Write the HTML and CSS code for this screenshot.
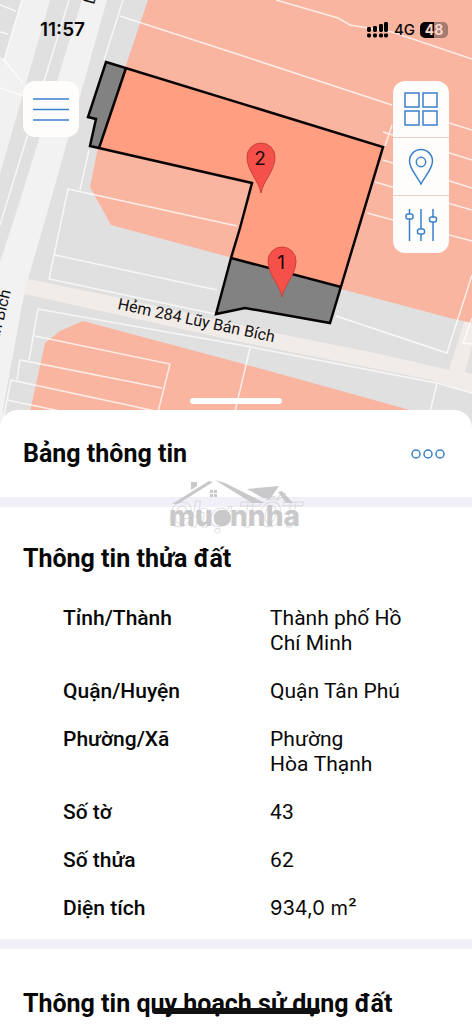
FILE: index.html
```
<!DOCTYPE html>
<html lang="vi">
<head>
  <meta charset="UTF-8" />
  <meta name="viewport" content="width=device-width, initial-scale=1.0" />
  <title>Bảng thông tin</title>
  <link rel="stylesheet" href="styles.css">
</head>
<body>
  <header class="map">
    <svg class="map-canvas" viewBox="0 0 472 430" preserveAspectRatio="xMidYMin slice" aria-label="Bản đồ thửa đất">
      <rect width="472" height="430" fill="#e0e0e0" />

      <!-- roads -->
      <path fill="#f1f1f1" d="M22 0H50L0 174V60H4Z" />
      <path fill="#f2f2f2" d="M82 0H107L48 210L28 279L22 305L3 410V430H0V262L17 210Z" />
      <path fill="#f2ece9" d="M28 279L120 298L275 333L380 354L449 370L472 297V393L432 380L232 340L24 294Z" />
      <path fill="#e0e0e0" d="M465 372L472 345V374Z" />

      <!-- residential land -->
      <path fill="#f9b5a0" d="M148 0H472V323L450 318L341 289L229 257L111 225L90 187L98 148Z" />
      <path fill="#f9b5a0" d="M26 430L45 343L60 331L83 321L240 363L410 410L472 430Z" />

      <!-- parcel borders -->
      <g class="borders">
        <path d="M22 0L4 60L23 83M0 58L4 60M0 88L24 96M0 5L16 11M0 32L8 34M69 0L0 225" />
        <path d="M123 0L104 60M89 150L80 190M120 16L240 55L392 105M276 0L338 18L350 25L392 32L472 59" />
        <path d="M392 125L385 146M420 114L472 130M383 132L472 160M383 160L472 188M375 182L472 210M367 213L472 241" />
        <path d="M237 226L68 189L49 279L215 314M55 255L217 290" />
        <path d="M336 316L447 353L472 275M472 344L463 343L472 318" />
        <path d="M29 360L38 309L240 345L437 383L472 393M437 383L428 420M250 348L233 420" />
        <path d="M35 336L170 364L156 420M17 380L20 360L162 388M3 420L11 380L160 412M7 400L60 411" />
      </g>

      <!-- selected parcel -->
      <path fill="#ff9e80" d="M126 68L383 147L341 287L231 258L252 183L99 148Z" />
      <path fill="#828282" d="M106 62L126 68L99 148L90 146L96 119L88 117Z" />
      <path fill="#828282" d="M231 258L341 287L330 323L245 308L216 314Z" />
      <path class="outline" d="M106 62L383 147L330 323L245 308L216 314L231 258L240 228L252 183L90 146L96 119L88 117Z" />
      <path class="outline" d="M126 68L99 148M231 258L341 287" />

      <!-- markers -->
      <g class="marker">
        <path d="M261 193C259 181 247 171 247 157A14 14 0 0 1 275 157C275 171 263 181 261 193Z" />
        <text x="260" y="165">2</text>
        <path d="M282 297C280 285 268 275 268 261A14 14 0 0 1 296 261C296 275 284 285 282 297Z" />
        <text x="281" y="269">1</text>
      </g>

      <g class="streets">
        <text transform="translate(117 309) rotate(12)">Hẻm 284 Lũy Bán Bích</text>
        <text transform="translate(11 291) rotate(-76)" text-anchor="end">Bán Bích</text>
        <text transform="translate(94 5) rotate(-75)">Lũy Bán Bích</text>
      </g>
    </svg>

    <div class="status">
      <span class="clock">11:57</span>
      <span class="network">
        <svg width="22" height="16" viewBox="0 0 22 16" aria-hidden="true">
          <g fill="#000">
            <rect x="0" y="5" width="4" height="5" rx="1.4" />
            <rect x="6" y="4" width="4" height="6" rx="1.4" />
            <rect x="12" y="2" width="4" height="8" rx="1.4" />
            <rect x="17" y="0" width="4" height="10" rx="1.4" />
            <rect x="0" y="11.5" width="4" height="4" rx="1.4" />
            <rect x="6" y="11.5" width="4" height="4" rx="1.4" />
            <rect x="12" y="11.5" width="4" height="4" rx="1.4" />
            <rect x="17" y="11.5" width="4" height="4" rx="1.4" />
          </g>
        </svg>
        <span>4G</span>
        <span class="battery">48</span>
      </span>
    </div>

    <div class="controls">
      <button class="menu" type="button" aria-label="Menu">
        <svg width="36" height="24" viewBox="0 0 36 24"><path d="M0 2H36M0 12.500H36M0 23H36" /></svg>
      </button>
      <div class="tools">
        <button type="button" aria-label="Lớp bản đồ">
          <svg width="34" height="34" viewBox="0 0 34 34"><path d="M1 1H15V15H1ZM19 1H33V15H19ZM1 19H15V33H1ZM19 19H33V33H19Z" /></svg>
        </button>
        <button type="button" aria-label="Vị trí">
          <svg width="26" height="38" viewBox="0 0 26 38"><path d="M13 36C9 28 1.500 21 1.500 13A11.500 11.500 0 0 1 24.500 13C24.500 21 17 28 13 36Z" /><circle cx="13" cy="14" r="4.700" /></svg>
        </button>
        <button type="button" aria-label="Bộ lọc">
          <svg width="34" height="34" viewBox="0 0 34 34"><path d="M5.500 1V6M5.500 11V33M17 1V21M17 26V33M29 1V9M29 14V33" /><rect x="2" y="6" width="7" height="5" rx="2" /><rect x="13.500" y="21" width="7" height="5" rx="2" /><rect x="25.500" y="9" width="7" height="5" rx="2" /></svg>
        </button>
      </div>
    </div>
    <div class="handle"></div>
  </header>

  <main class="sheet">
    <div class="sheet-header">
      <h1>Bảng thông tin</h1>
      <button class="more" type="button" aria-label="Xem thêm">
        <svg width="36" height="12" viewBox="0 0 36 12"><circle cx="6" cy="6" r="4" /><circle cx="18" cy="6" r="4" /><circle cx="30" cy="6" r="4" /></svg>
      </button>
      <svg class="watermark" width="136" height="64" viewBox="0 0 136 64" aria-hidden="true">
        <path d="M22 4H28V8L22 12ZM3 26L40 3L44 4L9 26ZM46 2L56 5L96 25H83ZM78 11L110 8L101 21L94 20ZM109 14L113 13L124 25H117Z" />
        <path d="M41 12H44V15H41ZM45 12H48V15H45ZM41 16H44V19H41ZM45 16H48V19H45Z" />
        <circle cx="54" cy="40" r="8" />
        <text class="watermark-name" x="0" y="48">muonnha</text>
        <text class="watermark-back" x="0" y="49">Chợ TỐT</text>
      </svg>
    </div>

    <section class="panel">
      <h2>Thông tin thửa đất</h2>
      <table class="info">
        <tr>
          <th scope="row">Tỉnh/Thành</th>
          <td>Thành phố Hồ Chí&nbsp;Minh</td>
        </tr>
        <tr>
          <th scope="row">Quận/Huyện</th>
          <td>Quận Tân Phú</td>
        </tr>
        <tr>
          <th scope="row">Phường/Xã</th>
          <td>Phường Hòa&nbsp;Thạnh</td>
        </tr>
        <tr>
          <th scope="row">Số tờ</th>
          <td>43</td>
        </tr>
        <tr>
          <th scope="row">Số thửa</th>
          <td>62</td>
        </tr>
        <tr>
          <th scope="row">Diện tích</th>
          <td class="area">934,0 m²</td>
        </tr>
      </table>
    </section>

    <section class="panel panel-last">
      <h2>Thông tin quy hoạch sử dụng đất</h2>
    </section>
  </main>

  <div class="home-indicator"></div>
</body>
</html>
```
FILE: styles.css
```
* {
  box-sizing: border-box;
}

body {
  margin: 0;
  font-family: Roboto, sans-serif;
  background: #fff;
  color: #080808;
}

button {
  border: none;
  padding: 0;
  background: none;
  cursor: pointer;
}

button svg {
  display: block;
  fill: none;
  stroke: #3a80ca;
  stroke-width: 1.5;
}

.map {
  position: relative;
  display: flex;
  flex-direction: column;
  height: 430px;
  padding-bottom: 26px;
}

.map-canvas {
  position: absolute;
  inset: 0;
  width: 100%;
  height: 100%;
}

.borders {
  fill: none;
  stroke: #fff;
  stroke-opacity: 0.75;
  stroke-width: 1.5;
}

.outline {
  fill: none;
  stroke: #080404;
  stroke-width: 2.5;
}

.marker path {
  fill: #f6504a;
  stroke: #c9423a;
}

.marker text {
  font-family: Inter, sans-serif;
  font-size: 19px;
  text-anchor: middle;
  fill: #240808;
}

.streets text {
  font-size: 16px;
  fill: #111;
}

.status {
  position: relative;
  display: flex;
  justify-content: space-between;
  align-items: center;
  padding: 18px 24px 0 40px;
  font-family: Inter, sans-serif;
  line-height: 24px;
}

.clock {
  font-size: 19px;
  font-weight: 600;
}

.network {
  display: flex;
  align-items: center;
  gap: 5px;
  font-size: 15px;
  font-weight: 500;
}

.battery {
  width: 28px;
  border-radius: 5px;
  background: linear-gradient(to right, #080404 50%, #a47b70 50%);
  color: #fbd5c8;
  font-size: 14px;
  font-weight: 700;
  line-height: 16px;
  text-align: center;
}

.controls {
  position: relative;
  display: flex;
  justify-content: space-between;
  align-items: flex-start;
  padding: 39px 23px 0;
}

.menu,
.tools {
  width: 56px;
  border-radius: 12px;
  background: #fffdfc;
}

.menu,
.tools button {
  display: flex;
  align-items: center;
  justify-content: center;
  width: 56px;
  height: 56px;
}

.tools button + button {
  height: 58px;
  border-top: 1px solid #ecd0c6;
}

.handle {
  position: relative;
  width: 92px;
  height: 6px;
  margin: auto auto 0;
  border-radius: 3px;
  background: #fff;
}

.sheet {
  position: relative;
  margin-top: -20px;
  border-radius: 18px 18px 0 0;
  background: #fff;
}

.sheet-header {
  position: relative;
  display: flex;
  justify-content: space-between;
  align-items: center;
  height: 87px;
  padding: 0 26px 0 23px;
}

h1,
h2 {
  margin: 0;
  font-size: 25px;
  font-weight: 700;
  line-height: 30px;
}

.watermark {
  position: absolute;
  top: 68px;
  left: 50%;
  z-index: 1;
  margin-left: -67px;
  fill: #c9c8cb;
}

.watermark-name {
  font-family: Inter, sans-serif;
  font-size: 28px;
  font-weight: 800;
}

.watermark-back {
  font-size: 35px;
  font-style: italic;
  font-weight: 700;
  fill: none;
  stroke: #c9c8cb;
  stroke-width: 0.5;
}

.panel {
  padding: 37px 23px 7px;
  border-top: 10px solid #f1f0f8;
}

.panel-last {
  padding: 40px 23px 5px;
}

.info {
  width: 100%;
  margin-top: 20px;
  border-collapse: collapse;
  font-size: 21px;
  line-height: 25px;
  text-align: left;
}

.info th,
.info td {
  padding: 12px 0 11px;
  vertical-align: top;
}

.info th {
  width: 58%;
  padding-left: 40px;
  font-weight: 500;
}

.info td {
  padding-right: 30px;
}

.info .area {
  font-family: Inter, sans-serif;
  font-size: 20px;
}

.home-indicator {
  position: fixed;
  bottom: 10px;
  left: 50%;
  width: 168px;
  height: 6px;
  margin-left: -84px;
  border-radius: 3px;
  background: #111;
}
```
